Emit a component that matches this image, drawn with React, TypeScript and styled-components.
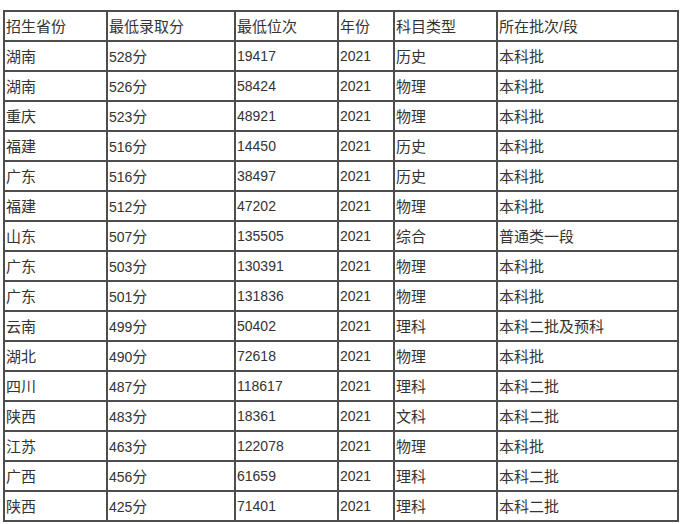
import { createGlobalStyle } from "styled-components";
import styled from "styled-components";

const GlobalStyle = createGlobalStyle`
  html, body {
    margin: 0;
    padding: 0;
    background: #ffffff;
  }
  body {
    font-family: "Liberation Sans", "Noto Sans CJK SC", sans-serif;
    color: #333333;
  }
`;

const Page = styled.div`
  padding: 10px 0 0 3px;
`;

const Table = styled.table`
  border-collapse: collapse;
  table-layout: fixed;
  width: 674px;
  font-size: 14px;
`;

const Cell = styled.td`
  border: 2px solid #4d4d4d;
  height: 28px;
  padding: 0 0 0 1px;
  box-sizing: border-box;
  line-height: 16px;
  text-align: left;
  vertical-align: middle;
  white-space: nowrap;
  overflow: hidden;
  font-weight: normal;
`;

// CJK glyphs in the original render a touch larger than the latin digits
const Han = styled.span`
  font-family: "Noto Sans CJK SC", sans-serif;
  font-size: 15px;
  line-height: 16px;
`;

const Row = styled.tr`
  height: 30px;
`;

const widths = [103, 128, 103, 56, 103, 181];

const header = ["招生省份", "最低录取分", "最低位次", "年份", "科目类型", "所在批次/段"];

const rows: string[][] = [
  ["湖南", "528分", "19417", "2021", "历史", "本科批"],
  ["湖南", "526分", "58424", "2021", "物理", "本科批"],
  ["重庆", "523分", "48921", "2021", "物理", "本科批"],
  ["福建", "516分", "14450", "2021", "历史", "本科批"],
  ["广东", "516分", "38497", "2021", "历史", "本科批"],
  ["福建", "512分", "47202", "2021", "物理", "本科批"],
  ["山东", "507分", "135505", "2021", "综合", "普通类一段"],
  ["广东", "503分", "130391", "2021", "物理", "本科批"],
  ["广东", "501分", "131836", "2021", "物理", "本科批"],
  ["云南", "499分", "50402", "2021", "理科", "本科二批及预科"],
  ["湖北", "490分", "72618", "2021", "物理", "本科批"],
  ["四川", "487分", "118617", "2021", "理科", "本科二批"],
  ["陕西", "483分", "18361", "2021", "文科", "本科二批"],
  ["江苏", "463分", "122078", "2021", "物理", "本科批"],
  ["广西", "456分", "61659", "2021", "理科", "本科二批"],
  ["陕西", "425分", "71401", "2021", "理科", "本科二批"],
];

const renderText = (text: string) =>
  text.split(/([\u3000-\u9fff]+)/).map((part, i) =>
    /[\u3000-\u9fff]/.test(part) ? <Han key={i}>{part}</Han> : part
  );

export default function App() {
  return (
    <>
      <GlobalStyle />
      <Page>
        <Table>
          <colgroup>
            {widths.map((w, i) => (
              <col key={i} style={{ width: w }} />
            ))}
          </colgroup>
          <tbody>
            <Row>
              {header.map((h) => (
                <Cell key={h}>{renderText(h)}</Cell>
              ))}
            </Row>
            {rows.map((r, i) => (
              <Row key={i}>
                {r.map((c, j) => (
                  <Cell key={j}>{renderText(c)}</Cell>
                ))}
              </Row>
            ))}
          </tbody>
        </Table>
      </Page>
    </>
  );
}
